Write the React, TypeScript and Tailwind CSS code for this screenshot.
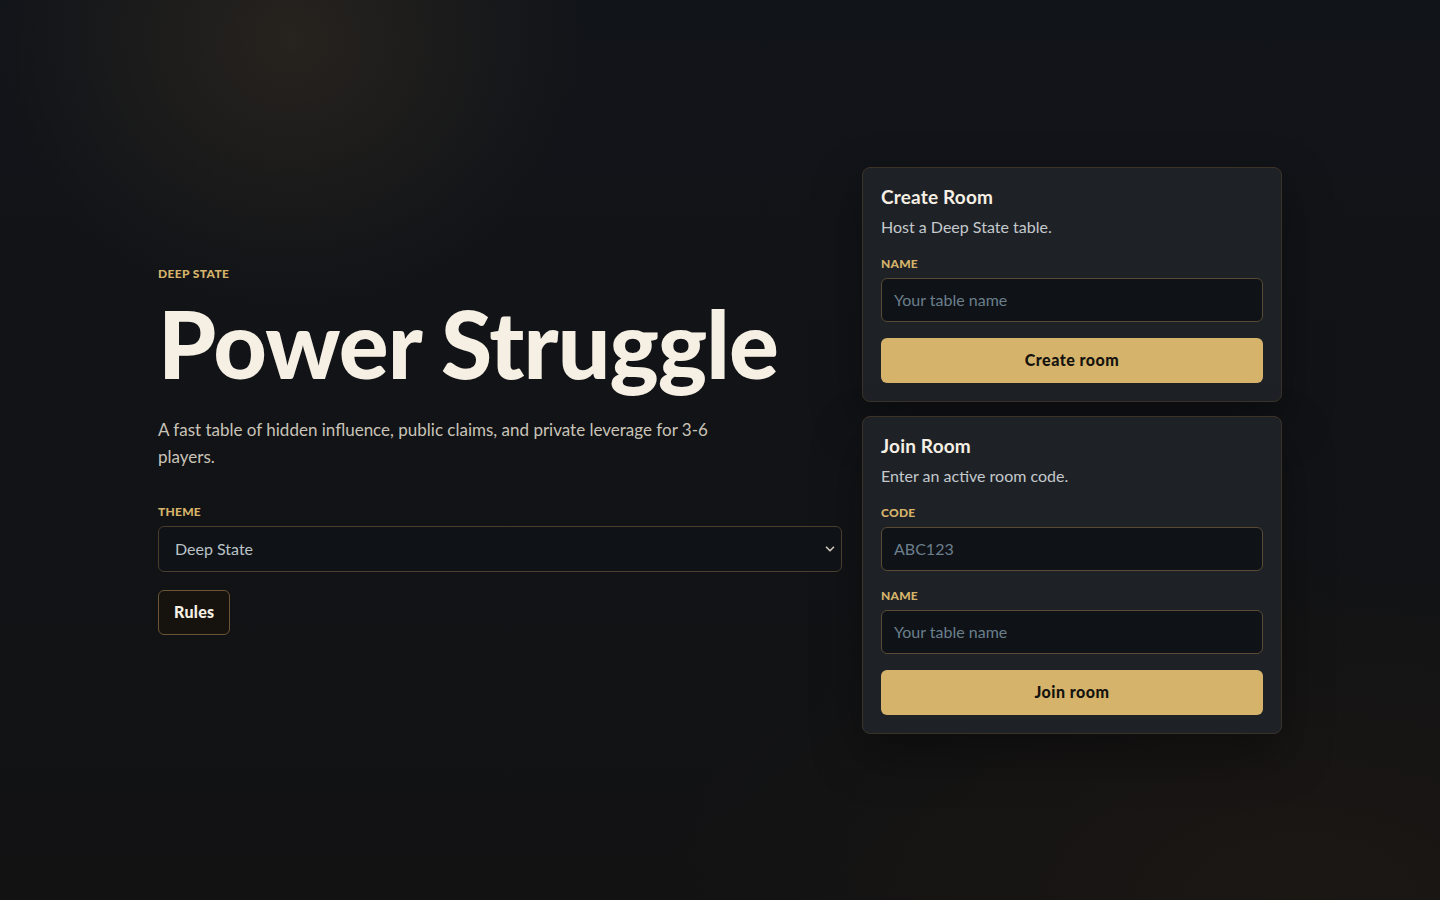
import { ChevronDown } from 'lucide-react';

const fieldClass =
  'h-11 w-full rounded-md border border-[#5b4a33] bg-[#0f1217] px-3 text-[16px] text-[#e8e2d6] placeholder:text-[#6b7f8c] outline-none';

function Label({ children }: { children: string }) {
  return <div className="mb-[5px] text-[12px] font-black tracking-[0.02em] text-[#d6b36a] uppercase">{children}</div>;
}

function RoomCard({
  title,
  subtitle,
  fields,
  action,
}: {
  title: string;
  subtitle: string;
  fields: { label: string; placeholder: string }[];
  action: string;
}) {
  return (
    <section className="rounded-lg border border-[#3b3328] bg-[#1e2227] px-[18px] pt-[17px] pb-[18px] shadow-[0_20px_50px_rgba(0,0,0,0.35)]">
      <h2 className="text-[19px] leading-6 font-bold tracking-[0.01em] text-[#f5efe4]">{title}</h2>
      <p className="mt-[8px] text-[16px] leading-5 text-[#c4c9cc]">{subtitle}</p>
      <div className="mt-[18px] flex flex-col gap-[16px]">
        {fields.map((f) => (
          <div key={f.label}>
            <Label>{f.label}</Label>
            <input className={fieldClass} placeholder={f.placeholder} />
          </div>
        ))}
      </div>
      <button className="mt-4 h-[45px] w-full rounded-md bg-[#d6b36a] text-[16px] font-black tracking-[0.03em] text-[#15130f]">
        {action}
      </button>
    </section>
  );
}

export default function App() {
  return (
    <main
      className="relative flex min-h-screen items-center overflow-hidden bg-gradient-to-b from-[#111419] to-[#121213] px-[158px] text-[#f5efe4]"
      style={{ fontFamily: 'Lato, "Noto Sans", sans-serif' }}
    >
      {/* warm glows */}
      <div className="pointer-events-none absolute inset-0 bg-[radial-gradient(ellipse_420px_380px_at_290px_40px,rgba(60,50,35,0.5),transparent_70%)]" />
      <div className="pointer-events-none absolute inset-0 bg-[radial-gradient(ellipse_900px_500px_at_1300px_900px,rgba(28,24,20,0.9),transparent_70%)]" />

      <div className="relative grid w-full grid-cols-[minmax(0,1fr)_420px] items-center gap-5">
        <div>
          <div className="text-[12px] font-black tracking-[0.03em] text-[#d6b36a]">DEEP STATE</div>
          <h1 className="mt-[9px] text-[93px] leading-[1.1] font-black tracking-[-0.01em] whitespace-nowrap text-[#f5efe4]">
            Power Struggle
          </h1>
          <p className="mt-[21px] max-w-[560px] text-[17px] leading-[27px] text-[#c9c3b8]">
            A fast table of hidden influence, public claims, and private leverage for 3-6 players.
          </p>
          <div className="mt-[33px]">
            <Label>THEME</Label>
            <div className="relative">
              <select className="h-[46px] w-full appearance-none rounded-md border border-[#4a3d2c] bg-[#0f1217] pr-8 pl-4 text-[16px] text-[#b9c2c7] outline-none">
                <option>Deep State</option>
              </select>
              <ChevronDown className="pointer-events-none absolute top-1/2 right-[5px] h-[14px] w-[14px] -translate-y-1/2 text-[#c9c3b8]" strokeWidth={3} />
            </div>
          </div>
          <button className="mt-[18px] h-[45px] rounded-md border border-[#6b5535] bg-[#16130f] px-[15px] text-[16px] font-black tracking-[0.02em] text-[#f5efe4]">
            Rules
          </button>
        </div>

        <div className="flex flex-col gap-[14px]">
          <RoomCard
            title="Create Room"
            subtitle="Host a Deep State table."
            fields={[{ label: 'NAME', placeholder: 'Your table name' }]}
            action="Create room"
          />
          <RoomCard
            title="Join Room"
            subtitle="Enter an active room code."
            fields={[
              { label: 'CODE', placeholder: 'ABC123' },
              { label: 'NAME', placeholder: 'Your table name' },
            ]}
            action="Join room"
          />
        </div>
      </div>
    </main>
  );
}
